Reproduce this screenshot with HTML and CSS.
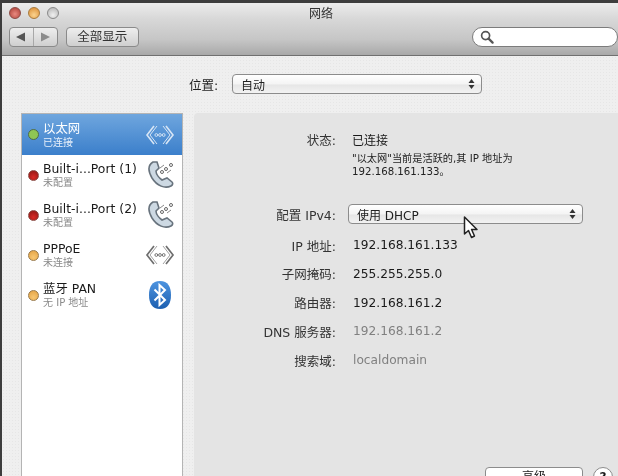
FILE: index.html
```html
<!DOCTYPE html>
<html lang="zh">
<head>
<meta charset="utf-8">
<title>网络</title>
<link rel="stylesheet" href="styles.css">
</head>
<body>
<div class="window">
  <header class="toolbar">
    <div class="lights">
      <span class="light red"></span>
      <span class="light amber"></span>
      <span class="light off"></span>
      <span class="title">网络</span>
    </div>
    <div class="tools">
      <div class="nav">
        <span class="nav-part"><svg width="12" height="10" viewBox="0 0 12 10"><path d="M1 5 L10 0.5 V9.5 Z" fill="#555"/></svg></span>
        <span class="nav-part nav-right"><svg width="12" height="10" viewBox="0 0 12 10"><path d="M11 5 L2 0.5 V9.5 Z" fill="#8c8c8c"/></svg></span>
      </div>
      <div class="show-all">全部显示</div>
      <div class="search">
        <svg width="14" height="14" viewBox="0 0 14 14"><circle cx="5.6" cy="5.6" r="4" fill="none" stroke="#555" stroke-width="1.7"/><path d="M8.6 8.6 L12.6 12.6" stroke="#555" stroke-width="2.2" stroke-linecap="round"/></svg>
      </div>
    </div>
  </header>

  <main class="content">
    <div class="location">
      <span class="location-label">位置:</span>
      <div class="select location-select">
        <span>自动</span>
        <svg class="updown" width="7" height="12" viewBox="0 0 7 12"><path d="M3.5 1 L6.5 5 H.5 Z M3.5 11 L.5 7 H6.5 Z" fill="#333"/></svg>
      </div>
    </div>

    <div class="columns">
      <aside class="services">
        <div class="service selected">
          <span class="dot green"></span>
          <div class="service-text"><div class="service-name">以太网</div><div class="service-sub">已连接</div></div>
          <svg class="service-icon" width="30" height="24" viewBox="0 0 30 24"><g fill="none" stroke="#d7e5f5" stroke-width="1.6"><path d="M9 3 L2 12 L9 21"/><path d="M12 3 L5 12 L12 21" stroke-width="1"/><path d="M21 3 L28 12 L21 21"/><path d="M18 3 L25 12 L18 21" stroke-width="1"/></g><g fill="none" stroke="#d7e5f5" stroke-width=".9"><circle cx="11.3" cy="12" r="1.4"/><circle cx="15" cy="12" r="1.4"/><circle cx="18.7" cy="12" r="1.4"/></g></svg>
        </div>
        <div class="service">
          <span class="dot red-dot"></span>
          <div class="service-text"><div class="service-name">Built-i...Port (1)</div><div class="service-sub">未配置</div></div>
          <svg class="service-icon" width="28" height="30" viewBox="0 0 28 30"><path d="M6 2 C1 5 1 11 5 18 C10 26 18 29 24 26 C26 25 26 23 25 22 L20 18 L15 20 C12 18 9 14 9 11 L12 8 L10 2 Z" fill="#cdd9e3" stroke="#68737d" stroke-width="1.6"/><g fill="#fff" stroke="#666" stroke-width="1"><circle cx="15" cy="12" r="1.5"/><circle cx="19" cy="9" r="1.5"/><circle cx="24" cy="5" r="1.5"/></g><path d="M13 8 L17 5 M20 13 L24 10" stroke="#888" stroke-width="1"/></svg>
        </div>
        <div class="service">
          <span class="dot red-dot"></span>
          <div class="service-text"><div class="service-name">Built-i...Port (2)</div><div class="service-sub">未配置</div></div>
          <svg class="service-icon" width="28" height="30" viewBox="0 0 28 30"><path d="M6 2 C1 5 1 11 5 18 C10 26 18 29 24 26 C26 25 26 23 25 22 L20 18 L15 20 C12 18 9 14 9 11 L12 8 L10 2 Z" fill="#cdd9e3" stroke="#68737d" stroke-width="1.6"/><g fill="#fff" stroke="#666" stroke-width="1"><circle cx="15" cy="12" r="1.5"/><circle cx="19" cy="9" r="1.5"/><circle cx="24" cy="5" r="1.5"/></g><path d="M13 8 L17 5 M20 13 L24 10" stroke="#888" stroke-width="1"/></svg>
        </div>
        <div class="service">
          <span class="dot amber-dot"></span>
          <div class="service-text"><div class="service-name">PPPoE</div><div class="service-sub">未连接</div></div>
          <svg class="service-icon" width="30" height="24" viewBox="0 0 30 24"><g fill="none" stroke="#6e6e6e" stroke-width="1.7"><path d="M9 3 L2 12 L9 21"/><path d="M12 3 L5 12 L12 21" stroke-width="1" stroke="#a0a0a0"/><path d="M21 3 L28 12 L21 21"/><path d="M18 3 L25 12 L18 21" stroke-width="1" stroke="#a0a0a0"/></g><g fill="none" stroke="#666" stroke-width=".9"><circle cx="11.3" cy="12" r="1.4"/><circle cx="15" cy="12" r="1.4"/><circle cx="18.7" cy="12" r="1.4"/></g></svg>
        </div>
        <div class="service">
          <span class="dot amber-dot"></span>
          <div class="service-text"><div class="service-name">蓝牙 PAN</div><div class="service-sub">无 IP 地址</div></div>
          <svg class="service-icon bt-icon" width="24" height="30" viewBox="0 0 24 30"><defs><linearGradient id="bt" x1="0" y1="0" x2="0" y2="1"><stop offset="0" stop-color="#4d94e0"/><stop offset="1" stop-color="#1c5fb0"/></linearGradient></defs><path d="M12 1 C20 1 23 7 23 15 C23 23 20 29 12 29 C4 29 1 23 1 15 C1 7 4 1 12 1 Z" fill="url(#bt)"/><path d="M6.5 9.5 L17 20 L11.5 25 V5 L17 10 L6.5 20.5" fill="none" stroke="#fff" stroke-width="2"/></svg>
        </div>
      </aside>

      <section class="panel">
        <div class="row status-row"><span class="label">状态:</span><span class="value status">已连接</span></div>
        <p class="note">"以太网"当前是活跃的,其 IP 地址为<br>192.168.161.133。</p>
        <div class="row config-row">
          <span class="label">配置 IPv4:</span>
          <div class="select config-select">
            <span>使用 DHCP</span>
            <svg class="updown" width="7" height="12" viewBox="0 0 7 12"><path d="M3.5 1 L6.5 5 H.5 Z M3.5 11 L.5 7 H6.5 Z" fill="#333"/></svg>
          </div>
        </div>
        <div class="row"><span class="label">IP 地址:</span><span class="value ip">192.168.161.133</span></div>
        <div class="row"><span class="label">子网掩码:</span><span class="value ip">255.255.255.0</span></div>
        <div class="row"><span class="label">路由器:</span><span class="value ip">192.168.161.2</span></div>
        <div class="row"><span class="label">DNS 服务器:</span><span class="value ip muted">192.168.161.2</span></div>
        <div class="row"><span class="label">搜索域:</span><span class="value ip muted">localdomain</span></div>
        <div class="footer">
          <div class="advanced">高级</div>
          <div class="help">?</div>
        </div>
      </section>
    </div>
  </main>
  <svg class="cursor" width="16" height="24" viewBox="0 0 16 24"><path d="M1.5 1 V18 L5.5 14.5 L8.5 21.5 L11.5 20 L8.6 13.5 H14 Z" fill="#fff" stroke="#222" stroke-width="1.5" stroke-linejoin="round"/></svg>
</div>
</body>
</html>
```

FILE: styles.css
```css
* { box-sizing: border-box; }
html, body { margin: 0; padding: 0; }
body {
  width: 618px;
  height: 476px;
  overflow: hidden;
  background: #3d3d3d;
  font-family: "DejaVu Sans", "Noto Sans CJK SC", sans-serif;
  color: #1a1a1a;
}
.window {
  position: relative;
  width: 616px;
  height: 473px;
  margin: 3px 0 0 2px;
  display: flex;
  flex-direction: column;
  overflow: hidden;
  filter: blur(0.35px);
}
.toolbar {
  height: 53px;
  flex: none;
  background: linear-gradient(#ececec, #d8d8d8 30%, #c6c6c6 70%, #a9a9a9);
  border-bottom: 1px solid #707070;
}
.lights {
  position: relative;
  display: flex;
  gap: 7px;
  align-items: center;
  height: 20px;
  padding: 0 0 0 7px;
}
.light {
  width: 12px;
  height: 12px;
  border-radius: 50%;
  border: 1px solid #8a8a8a;
}
.light.red { background: radial-gradient(circle at 50% 60%, #e98a80, #a83a32); border-color: #8c4a44; }
.light.amber { background: radial-gradient(circle at 50% 70%, #fbd38e, #d98a30); border-color: #a87a3c; }
.light.off { background: radial-gradient(circle at 50% 70%, #f0f0f0, #b0b0b0); }
.title {
  position: absolute;
  left: 307px;
  top: 3px;
  font-size: 12px;
  line-height: 16px;
  color: #333;
}
.tools {
  display: flex;
  align-items: flex-start;
  padding: 4px 0 0 7px;
}
.nav, .show-all {
  height: 20px;
  border: 1px solid #8a8a8a;
  border-radius: 4px;
  background: linear-gradient(#eeeeee, #cfcfcf);
}
.nav {
  width: 50px;
  display: flex;
}
.nav-part {
  flex: 1;
  display: flex;
  align-items: center;
  justify-content: center;
}
.nav-right { border-left: 1px solid #a8a8a8; }
.show-all {
  width: 75px;
  margin-left: 8px;
  font-size: 12.5px;
  line-height: 18px;
  text-align: center;
  color: #333;
}
.search {
  width: 150px;
  height: 20px;
  margin-left: 333px;
  padding: 2px 0 0 7px;
  border: 1px solid #7c7c7c;
  border-radius: 10px;
  background: #fff;
  display: flex;
}
.content {
  flex: 1;
  background-color: #efefef;
  background-image: radial-gradient(#e6e6e6 0.6px, transparent 0.8px);
  background-size: 3px 3px;
}
.location {
  display: flex;
  align-items: center;
  height: 20px;
  margin: 18px 0 0 187px;
}
.location-label {
  width: 43px;
  font-size: 12.5px;
  color: #222;
}
.select {
  height: 20px;
  display: flex;
  align-items: center;
  justify-content: space-between;
  border: 1px solid #8c8c8c;
  border-radius: 4px;
  background: linear-gradient(#fff, #f4f4f4 50%, #e6e6e6 55%, #f2f2f2);
  font-size: 12px;
  padding: 0 6px 0 8px;
  color: #222;
}
.location-select { width: 250px; }
.columns {
  display: flex;
  margin: 19px 0 0 19px;
  height: 400px;
}
.services {
  width: 162px;
  flex: none;
  background: #fff;
  border: 1px solid #b4b4b4;
  border-bottom: 0;
}
.service {
  height: 40px;
  display: flex;
  align-items: center;
  padding: 0 7px 0 6px;
}
.service.selected {
  height: 41px;
  background: linear-gradient(#6fa6de, #3b7fcb);
  color: #fff;
}
.dot {
  width: 11px;
  height: 11px;
  border-radius: 50%;
  flex: none;
  margin-right: 4px;
}
.green { background: #8fc654; border: 1px solid #4f6b4a; }
.red-dot { background: radial-gradient(circle at 50% 70%, #d92a26, #8a1512); border: 1px solid #8c4a44; }
.amber-dot { background: radial-gradient(circle at 50% 70%, #f7c671, #e3a040); border: 1px solid #9a7a4a; }
.service-text { flex: 1; min-width: 0; white-space: nowrap; }
.service-name { font-size: 12.4px; line-height: 15px; }
.service-sub { font-size: 10px; line-height: 13px; color: #8a8a8a; }
.selected .service-sub { color: #e8f0fa; }
.service-icon { flex: none; }
.bt-icon { margin-right: 3px; }
.panel {
  width: 425px;
  margin-left: 11px;
  background: #e4e4e4;
  border-radius: 4px 0 0 0;
  padding: 16px 0 0;
  font-size: 12px;
}
.row {
  display: flex;
  align-items: center;
  height: 20px;
  margin-bottom: 8.75px;
}
.label {
  width: 142px;
  text-align: right;
  color: #333;
  white-space: nowrap;
  font-size: 12.5px;
}
.value { margin-left: 16px; }
.status { color: #1a1a1a; }
.ip { font-size: 12.2px; margin-left: 17px; color: #1a1a1a; }
.muted { color: #808080; }
.status-row { margin-bottom: 3px; }
.note {
  margin: 0 0 26px 158px;
  font-size: 10.2px;
  line-height: 13px;
  color: #222;
}
.config-row { margin-bottom: 11px; }
.config-select { width: 235px; margin-left: 12px; padding-left: 8px; }
.footer {
  display: flex;
  align-items: flex-start;
  margin: 97px 0 0 291px;
}
.advanced {
  width: 98px;
  height: 20px;
  border: 1px solid #8c8c8c;
  border-radius: 4px;
  background: #fff;
  text-align: center;
  line-height: 18px;
}
.help {
  width: 20px;
  height: 20px;
  margin-left: 10px;
  border: 1px solid #8c8c8c;
  border-radius: 50%;
  background: #fff;
  text-align: center;
  line-height: 18px;
  font-weight: bold;
}
.cursor {
  position: absolute;
  left: 461px;
  top: 213px;
}
```
